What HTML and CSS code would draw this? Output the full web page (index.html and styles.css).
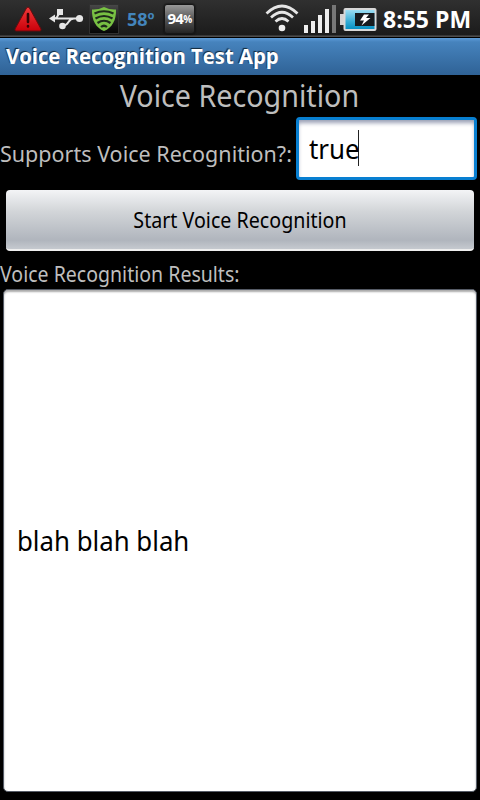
FILE: index.html
```
<!DOCTYPE html>
<html lang="en">
<head>
<meta charset="utf-8">
<title>Voice Recognition Test App</title>
<link rel="stylesheet" href="styles.css">
</head>
<body>
<header class="status">
  <svg class="warning" width="30" height="37" viewBox="0 0 30 37">
    <defs><linearGradient id="red" x2="0" y2="1"><stop stop-color="#f03a3a"/><stop offset="1" stop-color="#c9000a"/></linearGradient></defs>
    <path d="M13.500 8Q15 6 16.500 8L28 29Q28.500 31 27 31H3Q1.500 31 2 29Z" fill="url(#red)" stroke="#650c0e"/>
    <path d="M15 14V22M15 26V26.500" stroke="#340406" stroke-width="2.600" stroke-linecap="round"/>
  </svg>
  <svg class="usb" width="36" height="37" viewBox="0 0 36 37">
    <g fill="none" stroke="#e6e6e6" stroke-width="2"><path d="M4 18.500H30M6 18.500C10 18 8 12 13 12M13 26C21 26 18 18.500 25 18.500"/></g>
    <g fill="#e6e6e6"><path d="M0 18.500L6 14.500V22.500Z"/><path d="M8 9H14V15H8Z"/><circle cx="13.500" cy="26" r="3.300"/><circle cx="30.500" cy="18.500" r="3.600"/></g>
  </svg>
  <svg class="shield" width="32" height="37" viewBox="0 0 32 37">
    <defs><linearGradient id="tile" x2="0" y2="1"><stop stop-color="#494949"/><stop offset=".5" stop-color="#222"/><stop offset="1" stop-color="#050505"/></linearGradient></defs>
    <rect x="1.500" y="4.500" width="29" height="29" fill="url(#tile)" stroke="#303030"/>
    <path d="M16 7Q22 10 28 9.500C28.500 20 24 28 16 31C8 28 3.500 20 4 9.500Q10 10 16 7Z" fill="#78c143"/>
    <g fill="none" stroke="#1f2b1b" stroke-width="2.200"><path d="M6.500 13.500Q16 9 25.500 13.500M7.500 18.500Q16 13.500 24.500 18.500M9.500 23Q16 18.500 22.500 23M13 27Q16 24.500 19 27"/></g>
  </svg>
  <span class="temp">58º</span>
  <span class="percent">94<small>%</small></span>
  <svg class="wifi" width="36" height="37" viewBox="0 0 36 37">
    <g fill="none" stroke="#e5e5e5" stroke-width="2.700"><path d="M2.500 13.500Q18 -1.500 33.500 13.500M7 17.500Q18 7 29 17.500M11.500 21.500Q18 15.500 24.500 21.500"/></g>
    <circle cx="18" cy="28" r="3.300" fill="#eee"/>
  </svg>
  <svg class="signal" width="35" height="37" viewBox="0 0 35 37">
    <path d="M1 25H5V33H1ZM8 21H12V33H8ZM15 15H19V33H15ZM22 9H26V33H22Z" fill="#eee"/>
    <path d="M29 5H33V33H29Z" fill="#777"/>
  </svg>
  <svg class="battery" width="38" height="37" viewBox="0 0 38 37">
    <defs><linearGradient id="cell" x2="0" y2="1"><stop stop-color="#a6e2f5"/><stop offset=".6" stop-color="#35acd5"/><stop offset="1" stop-color="#008cc0"/></linearGradient></defs>
    <path d="M0 14H5V25H0Z" fill="#d4d4d4"/>
    <rect x="4.500" y="9" width="31" height="21" rx="1" fill="url(#cell)" stroke="#d8d8d8" stroke-width="2"/>
    <path d="M15 13H34.500V26H15Z" fill="#171b1e"/>
    <path d="M24 14.500H29L26 18H30.500L21.500 25.500L24 20.500H20Z" fill="#fff"/>
  </svg>
  <span class="clock">8:55 PM</span>
</header>
<div class="titlebar"><span class="fit">Voice Recognition Test App</span></div>
<main>
  <h1><span class="fit">Voice Recognition</span></h1>
  <div class="support">
    <div class="support-label"><span class="fit">Supports Voice Recognition?:</span></div>
    <div class="field"><span class="fit">true</span><i class="caret"></i></div>
  </div>
  <button><span class="fit">Start Voice Recognition</span></button>
  <div class="results-label"><span class="fit">Voice Recognition Results:</span></div>
  <div class="results"><span class="fit">blah blah blah</span></div>
</main>
</body>
</html>
```
FILE: styles.css
```
* { box-sizing: border-box; }
body { margin: 0; width: 480px; height: 800px; overflow: hidden; background: #000; color: #bebebe; font-family: "Noto Sans", sans-serif; white-space: nowrap; }
svg { display: block; flex: none; }
.fit { display: inline-block; transform: scaleX(var(--fit)); transform-origin: left; }
.status { display: flex; height: 38px; background: linear-gradient(#303030, #1b1b1b 35px, #555 36px, #444 37px, #000 37px); padding-left: 13px; }
.usb { margin-left: 6px; }
.shield { margin-left: 3px; }
.temp { width: 28px; margin-left: 7px; color: #4385bc; font: bold 18px/38px "Open Sans", sans-serif; }
.percent { width: 31px; height: 30px; margin: 4px 0 0 9px; border: 1px solid #171717; border-radius: 3px; background: linear-gradient(#999, #575757 50%, #242424); color: #fff; font: bold 15px/27px "Open Sans", sans-serif; text-align: center; letter-spacing: -.7px; box-shadow: 0 0 2px #000; }
.percent small { font-size: 10px; vertical-align: 1px; }
.wifi { margin-left: 69px; }
.signal { margin-left: 3px; }
.battery { margin-left: 2px; }
.clock { margin-left: 5px; color: #fff; font: bold 23px/38px "Open Sans", sans-serif; }
.titlebar { --fit: .922; height: 37px; padding-left: 6px; background: linear-gradient(#5c9bd8, #4683bd 4px, #2f6296); color: #fff; font: bold 22px/35px "Open Sans", sans-serif; text-shadow: -1px -1px 1px #132738; }
main { height: 725px; display: flex; flex-direction: column; }
h1 { --fit: .925; height: 42px; margin: 0; padding-right: 1px; font-weight: 400; font-size: 31px; line-height: 40px; text-align: center; }
h1 .fit, button .fit { transform-origin: center; }
.support { display: flex; height: 65px; justify-content: space-between; padding-right: 3px; }
.support-label { --fit: .978; width: 296px; font-size: 22px; line-height: 73px; }
.field { --fit: .96; display: flex; flex: none; align-items: center; width: 181px; height: 63px; border: 3px solid #087fd1; border-radius: 4px; padding: 0 10px 1px; background: #fff; color: #000; font-size: 27px; box-shadow: inset 0 4px 4px -1px #999fb4; }
.caret { width: 1px; height: 36px; margin-left: -4px; margin-bottom: 1px; background: #222; }
button { --fit: .893; height: 61px; margin: 8px 6px 0; padding: 0; border: 0; border-bottom: 2px solid #eee; border-radius: 4px; background: linear-gradient(#f3f4f6, #d3d6d9 35%, #b0b5bd 85%, #c5c9cf); color: #000; font: 22px/59px "Noto Sans", sans-serif; }
button .fit { display: block; margin-top: -1px; }
.results-label { --fit: .888; height: 38px; font-size: 22px; line-height: 44px; }
.results { --fit: .956; display: flex; align-items: center; width: 474px; height: 503px; margin-left: 3px; padding-left: 13px; border: 1px solid #555b66; border-radius: 5px; background: #fff; color: #000; font-size: 27px; box-shadow: inset 0 2px 2px #aaa; }
```
